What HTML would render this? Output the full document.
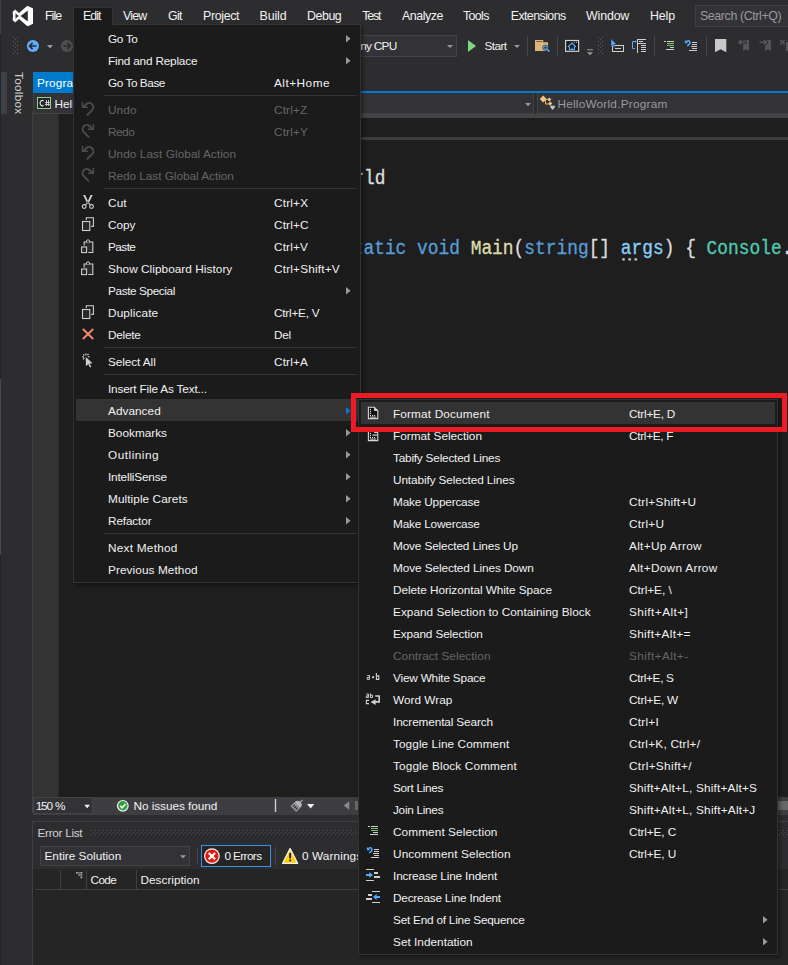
<!DOCTYPE html>
<html>
<head>
<meta charset="utf-8">
<title>Visual Studio</title>
<style>
html,body{margin:0;padding:0;width:788px;height:965px;overflow:hidden;}
body{width:788px;height:965px;overflow:hidden;background:#2d2d30;position:relative;
 font-family:"Liberation Sans",sans-serif;font-size:12px;color:#f1f1f1;}
.abs{position:absolute;}
.t{position:absolute;white-space:nowrap;line-height:14px;height:14px;}
svg{position:absolute;overflow:visible;}
.mb{position:absolute;top:9px;z-index:6;font-size:12.4px;letter-spacing:-0.15px;line-height:14px;white-space:nowrap;color:#f1f1f1;}
.menu{position:absolute;background:#1b1b1c;border:1px solid #333337;box-sizing:border-box;box-shadow:2px 2px 4px rgba(0,0,0,0.4);}
.mi{position:absolute;left:2px;right:2px;height:22px;}
.mi .l,.mi .s{position:absolute;top:5px;line-height:14px;white-space:nowrap;font-size:11.8px;letter-spacing:0px;}
.mi.dis{color:#656565;}
.mi.hl{background:#333334;}
.sep{position:absolute;height:1px;background:#333337;}
.arr{position:absolute;width:0;height:0;border-left:4.5px solid #999;border-top:3.75px solid transparent;border-bottom:3.75px solid transparent;}
.code{position:absolute;font-family:"Liberation Mono",monospace;font-size:20px;letter-spacing:0;line-height:24px;white-space:pre;color:#dcdcdc;transform:scaleX(0.8933);transform-origin:0 0;-webkit-text-stroke:0.35px;}
.vsep{position:absolute;width:1px;background:#46464a;}
</style>
</head>
<body>
<div id="root" style="position:absolute;left:0;top:0;width:788px;height:965px;overflow:hidden;">

<!-- ================= BACKGROUND APP ================= -->
<div id="app">
  <div class="abs" style="left:1px;top:72px;width:6px;height:42px;background:#3f3f46;"></div>
  <div class="abs" style="left:0;top:0;width:1px;height:34px;background:#3a4044;"></div>
  <div class="abs" style="left:0;top:34px;width:1px;height:345px;background:#222527;"></div>
  <div class="abs" style="left:0;top:379px;width:1px;height:176px;background:#454c50;"></div>
  <div class="abs" style="left:0;top:555px;width:1px;height:410px;background:#222527;"></div>
  <div class="t" style="left:26px;top:72px;transform:rotate(90deg);transform-origin:0 0;font-size:11.8px;color:#d0d0d0;letter-spacing:0.25px;">Toolbox</div>

  <div class="abs" style="left:33px;top:72px;width:60px;height:21px;background:#007acc;"></div>
  <div class="t" style="left:37px;top:76px;font-size:11.8px;color:#fff;letter-spacing:0.15px;">Program.cs</div>
  <div class="abs" style="left:33px;top:91px;width:755px;height:2px;background:#007acc;"></div>

  <div class="abs" style="left:33px;top:93px;width:755px;height:21px;background:#2d2d30;"></div>
  <div class="abs" style="left:33px;top:93px;width:501px;height:21px;box-sizing:border-box;background:#333337;border:1px solid #434346;border-top:none;"></div>
  <div class="abs" style="left:537px;top:93px;width:260px;height:21px;box-sizing:border-box;background:#333337;border:1px solid #434346;border-top:none;"></div>
  <svg style="left:33px;top:93px" width="40" height="22" viewBox="33 93 40 22">
    <rect x="37.5" y="97.5" width="13" height="11" fill="#252526" stroke="#8dd28a" stroke-width="1"/>
    <path d="M43.6 100.9A2.3 2.6 0 1 0 43.6 105.3" fill="none" stroke="#d8d8d8" stroke-width="1.2"/>
    <path d="M46.5 100.3V106M48.5 100.3V106M45 102.5H50M45 104.5H50" fill="none" stroke="#c8c8c8" stroke-width="1" shape-rendering="crispEdges"/>
  </svg>
  <div class="t" style="left:54.5px;top:97px;font-size:11.8px;color:#f1f1f1;">HelloWorld</div>
  <svg style="left:520px;top:93px" width="40" height="22" viewBox="520 93 40 22">
    <path d="M525 103H531L528 106.3Z" fill="#999"/>
    <path d="M545.5 100V104H549" fill="none" stroke="#e8b56d" stroke-width="1"/>
    <path d="M546 99.4H548.5" fill="none" stroke="#e8b56d" stroke-width="1"/>
    <path d="M543.2 95.6L546.6 99L543.2 102.4L539.8 99Z" fill="#f0c585"/>
    <path d="M549.4 97.4L551.4 99.4L549.4 101.4L547.4 99.4Z" fill="#f0c585"/>
    <path d="M550.2 101.5L552.3 103.6L550.2 105.7L548.1 103.6Z" fill="#f0c585"/>
    <path d="M552.6 110.2L550.2 107.4A1.5 1.5 0 0 1 552.6 105.7A1.5 1.5 0 0 1 555 107.4Z" fill="#c8c8c8" stroke="#333337" stroke-width="0.5"/>
  </svg>
  <div class="t" style="left:557.4px;top:97px;font-size:11.8px;color:#9a9a9a;letter-spacing:0.229px;">HelloWorld.Program</div>
  

  <div class="abs" style="left:33px;top:114px;width:755px;height:683px;background:#1e1e1e;"></div>
  <div class="abs" style="left:100px;top:114px;width:688px;height:4px;background:#444446;"></div>
  <div class="abs" style="left:33px;top:114px;width:25px;height:683px;background:#333333;"></div>
  <div class="abs" style="left:58px;top:114px;width:1px;height:683px;background:#2a2a2a;"></div>
  <div class="abs" style="left:32px;top:113px;width:1px;height:700px;background:#3f3f46;"></div>
  <div class="abs" style="left:100px;top:137px;width:688px;height:3px;background:#3c3c3c;"></div>

  <div class="code" style="left:171px;top:167px;">namespace HelloWorld</div>
  <div class="code" style="left:341.5px;top:236.5px;"><span style="color:#569cd6">static void</span> <span style="color:#dcdcaa">Main</span>(<span style="color:#569cd6">string</span>[] <span style="color:#8accf6">args</span>) { <span style="color:#4ec9b0">Console</span>.WriteLine</div>
  <svg style="left:620px;top:256px" width="20" height="8"><circle cx="3.5" cy="3.4" r="1.45" fill="#b4b4b4"/><circle cx="9.7" cy="3.4" r="1.45" fill="#b4b4b4"/><circle cx="15.8" cy="3.4" r="1.45" fill="#b4b4b4"/></svg>

  <div class="abs" style="left:33px;top:797px;width:755px;height:18px;background:#3e3e42;"></div>
  <div class="abs" style="left:33px;top:797px;width:60px;height:17px;box-sizing:border-box;background:#333337;border:1px solid #434346;"></div>
  <div class="t" style="left:35.7px;top:799px;font-size:11.8px;word-spacing:1px;letter-spacing:-1.15px;">150 %</div>
  <div class="t" style="left:133.5px;top:799px;font-size:11.8px;letter-spacing:-0.057px;">No issues found</div>
  <svg style="left:33px;top:797px" width="755" height="18" viewBox="33 797 755 18">
    <path d="M84.3 804.7H90L87.15 808.3Z" fill="#f1f1f1"/>
    <circle cx="122.8" cy="805.8" r="5.9" fill="#f4f4f4"/>
    <circle cx="122.8" cy="805.8" r="4.7" fill="#2f9e3c"/>
    <path d="M120.2 805.9L122.1 807.8L125.5 803.9" fill="none" stroke="#fff" stroke-width="1.5"/>
    <rect x="274.8" y="799" width="1.4" height="13" fill="#c8d0d8"/>
    <g transform="rotate(45 297 805.5)" fill="none" stroke="#b4b4b4" stroke-width="1">
      <path d="M297 797.5V801"/>
      <path d="M293.6 804.6A3.4 3.6 0 0 1 300.4 804.6Z" fill="#b4b4b4"/>
      <rect x="293.6" y="805.8" width="6.8" height="4.2"/>
      <path d="M295.8 806V810M298.2 806V810" stroke-width="0.8"/>
    </g>
    <path d="M307 804H314.3L310.65 808.6Z" fill="#f1f1f1"/>
    <path d="M349.2 801.2V809.8L343.8 805.5Z" fill="#8a8a8a"/>
    <rect x="355" y="801" width="433" height="9" fill="#686868"/>
  </svg>

  <div class="abs" style="left:32px;top:821px;width:760px;height:150px;background:#2d2d30;border:1px solid #3f3f46;box-sizing:border-box;"></div>
  <div class="t" style="left:37.5px;top:825.7px;font-size:11.8px;color:#d0d0d0;letter-spacing:-0.311px;">Error List</div>
  <svg style="left:91px;top:830px" width="697" height="5" viewBox="0 0 697 5">
    <defs><pattern id="gp" x="0" y="0" width="4" height="4" patternUnits="userSpaceOnUse"><rect x="0" y="0" width="1" height="1" fill="#4e4e52"/><rect x="2" y="2" width="1" height="1" fill="#4e4e52"/></pattern></defs>
    <rect x="0" y="0" width="697" height="5" fill="url(#gp)"/>
  </svg>
  <div class="abs" style="left:40px;top:846px;width:150px;height:20px;box-sizing:border-box;background:#333337;border:1px solid #434346;"></div>
  <div class="t" style="left:44.5px;top:849px;font-size:11.8px;letter-spacing:0px;">Entire Solution</div>
  <div class="vsep" style="left:197px;top:847px;height:18px;"></div>
  <div class="abs" style="left:201px;top:845px;width:70px;height:22px;box-sizing:border-box;background:#252526;border:1px solid #3794e8;"></div>
  <div class="t" style="left:224.5px;top:849px;font-size:11.8px;letter-spacing:-0.629px;">0 Errors</div>
  <div class="vsep" style="left:275px;top:847px;height:18px;"></div>
  <div class="t" style="left:302px;top:849px;font-size:11.8px;letter-spacing:0.1px;">0 Warnings</div>
  <svg style="left:33px;top:845px" width="330" height="22" viewBox="33 845 330 22">
    <path d="M180 855.2H186L183 858.4Z" fill="#999"/>
    <circle cx="211.9" cy="856.1" r="7.9" fill="#f4f4f4"/>
    <circle cx="211.9" cy="856.1" r="6.7" fill="#e01b10"/>
    <path d="M208.7 852.9L215.1 859.3M215.1 852.9L208.7 859.3" stroke="#fff" stroke-width="2.1"/>
    <path d="M290.1 848.6L297.6 863.3H282.6Z" fill="#ffcc00" stroke="#f4f4f4" stroke-width="1.3" stroke-linejoin="round"/>
    <rect x="289.3" y="853" width="1.7" height="5.4" fill="#111"/><rect x="289.3" y="859.6" width="1.7" height="1.7" fill="#111"/>
  </svg>
  <div class="abs" style="left:33px;top:869px;width:755px;height:96px;background:#252526;"></div>
  <div class="abs" style="left:35px;top:889px;width:753px;height:1px;background:#3f3f46;"></div>
  <div class="abs" style="left:60px;top:870px;width:1px;height:19px;background:#3f3f46;"></div>
  <div class="abs" style="left:86px;top:870px;width:1px;height:19px;background:#3f3f46;"></div>
  <div class="abs" style="left:136px;top:870px;width:1px;height:19px;background:#3f3f46;"></div>
  <svg style="left:76px;top:872px" width="8" height="8" viewBox="0 0 8 8"><rect x="0" y="0" width="6.2" height="1.5" fill="#7a7a7c"/><rect x="0" y="0" width="1.3" height="1.5" fill="#a8a8a8"/><rect x="4.9" y="0" width="1.3" height="1.5" fill="#a8a8a8"/><rect x="2" y="1.8" width="4.2" height="2.2" fill="#707072"/><rect x="4.4" y="4.6" width="1.8" height="1.6" fill="#b0b0b0"/><rect x="4.9" y="1.5" width="1.3" height="3.2" fill="#7a7a7c"/></svg>
  <div class="t" style="left:90.5px;top:873px;font-size:11.8px;letter-spacing:-0.633px;">Code</div>
  <div class="t" style="left:140.5px;top:873px;font-size:11.8px;letter-spacing:0px;">Description</div>
</div>

<!-- ================= TOOLBAR ================= -->
<div id="toolbar">
  <svg style="left:0;top:0" width="40" height="32" viewBox="0 0 40 32">
    <defs><clipPath id="lc"><rect x="12.7" y="5.6" width="20.4" height="20.9"/></clipPath></defs>
    <g clip-path="url(#lc)" fill="#fff" stroke="none">
      <path d="M13.6 11.3L28.6 24.4" stroke="#fff" stroke-width="4.5" fill="none"/>
      <path d="M13.6 20.8L28.6 7.7" stroke="#fff" stroke-width="4.5" fill="none"/>
      <polygon points="27.3,5.7 33.1,8.4 33.1,23.8 27.3,26.4"/>
      <rect x="12.7" y="11.2" width="2.5" height="9.7"/>
    </g>
    <polygon points="15.5,13.3 18.5,16.05 15.5,18.8" fill="#2d2d30"/>
    <polygon points="20.6,16.05 27.7,10.6 27.7,21.5" fill="#2d2d30"/>
  </svg>
  <svg style="left:0;top:32px" width="80" height="28" viewBox="0 32 80 28">
    <rect x="13" y="37" width="1" height="1" fill="#5d5d62"/><rect x="17" y="37" width="1" height="1" fill="#5d5d62"/><rect x="15" y="39" width="1" height="1" fill="#5d5d62"/><rect x="13" y="41" width="1" height="1" fill="#5d5d62"/><rect x="17" y="41" width="1" height="1" fill="#5d5d62"/><rect x="15" y="43" width="1" height="1" fill="#5d5d62"/><rect x="13" y="45" width="1" height="1" fill="#5d5d62"/><rect x="17" y="45" width="1" height="1" fill="#5d5d62"/><rect x="15" y="47" width="1" height="1" fill="#5d5d62"/><rect x="13" y="49" width="1" height="1" fill="#5d5d62"/><rect x="17" y="49" width="1" height="1" fill="#5d5d62"/><rect x="15" y="51" width="1" height="1" fill="#5d5d62"/><rect x="13" y="53" width="1" height="1" fill="#5d5d62"/><rect x="17" y="53" width="1" height="1" fill="#5d5d62"/>
    <circle cx="32.9" cy="46" r="6.1" fill="#5eaefc"/>
    <path d="M36.6 46H29.8M32.6 42.9L29.5 46L32.6 49.1" fill="none" stroke="#2d2d30" stroke-width="1.7"/>
    <path d="M47 45L53 45L50 48.4Z" fill="#999"/>
    <circle cx="66.9" cy="46" r="6.1" fill="#4f4f52"/>
    <path d="M63.2 46H70M67.2 42.9L70.3 46L67.2 49.1" fill="none" stroke="#2d2d30" stroke-width="1.7"/>
  </svg>
  <div class="abs" style="left:300px;top:35px;width:157px;height:22px;box-sizing:border-box;background:#333337;border:1px solid #434346;"></div>
  <div class="t" style="left:353px;top:39px;font-size:11.8px;letter-spacing:-0.717px;">Any CPU</div>
  <div class="abs" style="left:447px;top:45px;width:0;height:0;border-top:3px solid #999;border-left:3px solid transparent;border-right:3px solid transparent;"></div>
  <div class="abs" style="left:468px;top:40px;width:0;height:0;border-left:8px solid #82d682;border-top:6px solid transparent;border-bottom:6px solid transparent;"></div>
  <div class="t" style="left:484.5px;top:39px;font-size:11.8px;letter-spacing:-0.6px;">Start</div>
  <div class="abs" style="left:513.5px;top:45px;width:0;height:0;border-top:3px solid #999;border-left:3px solid transparent;border-right:3px solid transparent;"></div>
  <svg style="left:0;top:0" width="788" height="64" viewBox="0 0 788 64">
    <!-- folder search -->
    <path d="M535 40H543.2V42.3H548.1V51.1H535Z" fill="#dcb67a"/>
    <rect x="536.2" y="41.2" width="5.8" height="0.8" fill="#5a4a30"/>
    <circle cx="545.4" cy="47.6" r="2.9" fill="#2d2d30"/>
    <path d="M547 49.2L549.6 51.8" stroke="#2d2d30" stroke-width="3.2"/>
    <circle cx="545.4" cy="47.6" r="1.8" fill="#2d2d30" stroke="#55aaff" stroke-width="1.2"/>
    <path d="M546.8 49L549.4 51.6" stroke="#55aaff" stroke-width="1.5"/>
    <!-- window/home -->
    <rect x="565.6" y="40.5" width="13" height="10.8" fill="#1a1a1a" stroke="#cfcfcf" stroke-width="1.2"/>
    <rect x="573.7" y="41.8" width="1" height="1" fill="#cfcfcf"/><rect x="576" y="41.8" width="1" height="1" fill="#cfcfcf"/>
    <path d="M567.9 47L571.9 43L575.9 47" fill="none" stroke="#55aaff" stroke-width="1.2"/>
    <path d="M569.4 46.6V49.6H574.4V46.6" fill="none" stroke="#55aaff" stroke-width="1.1"/>
    <rect x="571.4" y="47.8" width="1.1" height="1.6" fill="#55aaff"/>
    <!-- overflow -->
    <rect x="587" y="49.3" width="6" height="1" fill="#999"/>
    <path d="M587 52.3H593L590 55.2Z" fill="#999"/>
    <rect x="598" y="37" width="1" height="1" fill="#5d5d62"/><rect x="602" y="37" width="1" height="1" fill="#5d5d62"/><rect x="600" y="39" width="1" height="1" fill="#5d5d62"/><rect x="598" y="41" width="1" height="1" fill="#5d5d62"/><rect x="602" y="41" width="1" height="1" fill="#5d5d62"/><rect x="600" y="43" width="1" height="1" fill="#5d5d62"/><rect x="598" y="45" width="1" height="1" fill="#5d5d62"/><rect x="602" y="45" width="1" height="1" fill="#5d5d62"/><rect x="600" y="47" width="1" height="1" fill="#5d5d62"/><rect x="598" y="49" width="1" height="1" fill="#5d5d62"/><rect x="602" y="49" width="1" height="1" fill="#5d5d62"/><rect x="600" y="51" width="1" height="1" fill="#5d5d62"/><rect x="598" y="53" width="1" height="1" fill="#5d5d62"/><rect x="602" y="53" width="1" height="1" fill="#5d5d62"/>
    <!-- cursor + box -->
    <rect x="612.5" y="45.5" width="11" height="6" fill="none" stroke="#cfcfcf" stroke-width="1"/>
    <rect x="615" y="48" width="6" height="1" fill="#cfcfcf"/>
    <path d="M611 38.8L616.6 44.3L614 44.5L615.2 46.8L613.8 47.4L612.6 45.1L611 46.7Z" fill="#55aaff" stroke="#2d2d30" stroke-width="0.5"/>
    <!-- bracket + lines -->
    <path d="M635 48.5H632.5V41.5H635.5" fill="none" stroke="#55aaff" stroke-width="1"/>
    <path d="M635 40.2L636.8 41.5L635 42.9Z" fill="#55aaff"/>
    <rect x="637" y="39" width="1" height="14" fill="#cfcfcf"/>
    <rect x="637" y="39" width="9" height="1" fill="#cfcfcf"/>
    <rect x="639" y="41" width="4" height="1" fill="#cfcfcf"/>
    <rect x="638" y="43" width="8" height="1" fill="#cfcfcf"/>
    <rect x="641" y="45" width="5" height="1" fill="#cfcfcf"/><rect x="641" y="47" width="5" height="1" fill="#cfcfcf"/>
    <rect x="641" y="49" width="5" height="1" fill="#cfcfcf"/><rect x="641" y="51" width="5" height="1" fill="#cfcfcf"/>
    <!-- comment -->
    <g transform="translate(661 38)"><rect x="3" y="3" width="2" height="1" fill="#cfcfcf"/><rect x="6" y="3" width="7" height="1" fill="#cfcfcf"/><rect x="6" y="5" width="7" height="1" fill="#7cc36e"/><rect x="6" y="7" width="7" height="1" fill="#7cc36e"/><rect x="9" y="9" width="4" height="1" fill="#cfcfcf"/><rect x="5" y="11" width="8" height="1" fill="#cfcfcf"/></g>
    <!-- uncomment -->
    <g transform="translate(683 38)"><rect x="9" y="4" width="5" height="1" fill="#cfcfcf"/><rect x="9" y="6" width="5" height="1" fill="#cfcfcf"/><rect x="8" y="8" width="6" height="1" fill="#cfcfcf"/><rect x="9" y="10" width="5" height="1" fill="#cfcfcf"/><rect x="6" y="12" width="8" height="1" fill="#cfcfcf"/><path d="M4.3 8L6.6 5.9A1.9 1.9 0 0 0 4.6 2.9L3.3 3.6" fill="none" stroke="#55aaff" stroke-width="1.5"/><path d="M1.9 2V5.2H5.2Z" fill="#55aaff"/></g>
    <!-- bookmark -->
    <path d="M715 39H726.3V52.3L720.6 49.3L715 52.3Z" fill="#c8c8c8"/>
    <!-- dim bookmarks -->
    <path d="M743.2 40H749V51L746.1 49.2L743.2 51Z" fill="#555558"/>
    <path d="M746.6 42.2H739M741.4 39.8L738.8 42.2L741.4 44.6" fill="none" stroke="#2d2d30" stroke-width="3.4"/><path d="M745.6 42.2H739M741.4 39.8L738.8 42.2L741.4 44.6" fill="none" stroke="#555558" stroke-width="1.5"/>
    <path d="M765 40H770.9V51L768 49.2L765 51Z" fill="#555558"/>
    <path d="M759.4 42.2H767M763.8 39.6L766.4 42.2L763.8 44.8" fill="none" stroke="#2d2d30" stroke-width="3.4"/><path d="M759.4 42.2H766M763.8 39.8L766.4 42.2L763.8 44.6" fill="none" stroke="#555558" stroke-width="1.5"/>
    <path d="M786 42H792V51H786Z" fill="#555558"/>
    <path d="M780 39.8L784.8 44.4M784.8 39.8L780 44.4" stroke="#555558" stroke-width="1.5"/>
  </svg>
  <div class="vsep" style="left:527px;top:36px;height:20px;"></div>
  <div class="vsep" style="left:557px;top:36px;height:20px;"></div>
  <div class="vsep" style="left:654px;top:36px;height:20px;"></div>
  <div class="vsep" style="left:706px;top:36px;height:20px;"></div>
</div>

<!-- ================= MENU BAR ================= -->
<div id="menubar">
  <div class="abs" style="left:73px;top:7px;width:40px;height:19px;background:#1b1b1c;border:1px solid #333337;border-bottom:none;box-sizing:border-box;z-index:5;"></div>
  <div class="mb" style="left:45px;letter-spacing:-0.95px;">File</div>
  <div class="mb" style="left:83px;letter-spacing:-0.95px;">Edit</div>
  <div class="mb" style="left:123.1px;letter-spacing:-0.85px;">View</div>
  <div class="mb" style="left:168px;letter-spacing:-0.7px;">Git</div>
  <div class="mb" style="left:203px;letter-spacing:-0.333px;">Project</div>
  <div class="mb" style="left:259.6px;letter-spacing:-0.15px;">Build</div>
  <div class="mb" style="left:307px;letter-spacing:-0.45px;">Debug</div>
  <div class="mb" style="left:362.3px;letter-spacing:-1.183px;">Test</div>
  <div class="mb" style="left:402px;letter-spacing:-0.467px;">Analyze</div>
  <div class="mb" style="left:463px;letter-spacing:-0.65px;">Tools</div>
  <div class="mb" style="left:510.7px;letter-spacing:-0.572px;">Extensions</div>
  <div class="mb" style="left:586px;letter-spacing:-0.15px;">Window</div>
  <div class="mb" style="left:650px;letter-spacing:-0.15px;">Help</div>
  <div class="abs" style="left:695px;top:5px;width:100px;height:22px;box-sizing:border-box;border:1px solid #3f3f46;background:#333337;"></div>
  <div class="mb" style="left:700px;color:#999;letter-spacing:-0.393px;">Search (Ctrl+Q)</div>
</div>
<div class="menu" id="editmenu" style="left:73px;top:24px;width:288px;height:559px;">
<div class="mi" style="top:2px;"><span class="l" style="left:32px;letter-spacing:-0.375px">Go To</span><svg style="left:270px;top:7.6px" width="5" height="8" viewBox="0 0 5 8"><path d="M0 0L4.6 3.7L0 7.4Z" fill="#999"/></svg></div>
<div class="mi" style="top:24px;"><span class="l" style="left:32px;letter-spacing:-0.200px">Find and Replace</span><svg style="left:270px;top:7.6px" width="5" height="8" viewBox="0 0 5 8"><path d="M0 0L4.6 3.7L0 7.4Z" fill="#999"/></svg></div>
<div class="mi" style="top:46px;"><span class="l" style="left:32px;letter-spacing:-0.444px">Go To Base</span><span class="s" style="left:198px;letter-spacing:0.485px">Alt+Home</span></div>
<div class="sep" style="left:30px;top:70px;width:253px;"></div>
<div class="mi dis" style="top:73px;"><svg style="left:4px;top:3px" width="16" height="16" viewBox="0 0 16 16"><path d="M6.9 14.3L12.1 9.1A4.1 4.1 0 0 0 6.3 3.2L4 5.4" fill="none" stroke="#4c4c4c" stroke-width="1.9"/><path d="M1.8 1.1H3.3V4.2L4.6 5.4H7.9V7H1.8Z" fill="#4c4c4c"/></svg><span class="l" style="left:32px;letter-spacing:0.084px">Undo</span><span class="s" style="left:198px;letter-spacing:0.160px">Ctrl+Z</span></div>
<div class="mi dis" style="top:95px;"><svg style="left:4px;top:3px" width="16" height="16" viewBox="0 0 16 16"><g transform="translate(15.9 0) scale(-1 1)"><path d="M6.9 14.3L12.1 9.1A4.1 4.1 0 0 0 6.3 3.2L4 5.4" fill="none" stroke="#4c4c4c" stroke-width="1.9"/><path d="M1.8 1.1H3.3V4.2L4.6 5.4H7.9V7H1.8Z" fill="#4c4c4c"/></g></svg><span class="l" style="left:32px;letter-spacing:-0.500px">Redo</span><span class="s" style="left:198px;letter-spacing:0.160px">Ctrl+Y</span></div>
<div class="mi dis" style="top:117px;"><svg style="left:4px;top:3px" width="16" height="16" viewBox="0 0 16 16"><path d="M6.9 14.3L12.1 9.1A4.1 4.1 0 0 0 6.3 3.2L4 5.4" fill="none" stroke="#4c4c4c" stroke-width="1.9"/><path d="M1.8 1.1H3.3V4.2L4.6 5.4H7.9V7H1.8Z" fill="#4c4c4c"/></svg><span class="l" style="left:32px;letter-spacing:0.068px">Undo Last Global Action</span></div>
<div class="mi dis" style="top:139px;"><svg style="left:4px;top:3px" width="16" height="16" viewBox="0 0 16 16"><g transform="translate(15.9 0) scale(-1 1)"><path d="M6.9 14.3L12.1 9.1A4.1 4.1 0 0 0 6.3 3.2L4 5.4" fill="none" stroke="#4c4c4c" stroke-width="1.9"/><path d="M1.8 1.1H3.3V4.2L4.6 5.4H7.9V7H1.8Z" fill="#4c4c4c"/></g></svg><span class="l" style="left:32px;letter-spacing:-0.033px">Redo Last Global Action</span></div>
<div class="sep" style="left:30px;top:163px;width:253px;"></div>
<div class="mi" style="top:166px;"><svg style="left:4px;top:3px" width="16" height="16" viewBox="0 0 16 16"><path d="M3.1 1L5.2 1L8.6 8.6L7.2 9.4Z M12.7 1L10.6 1L7.2 8.6L8.6 9.4Z" fill="#cfcfcf"/><path d="M7.1 9L5.6 10.8M8.7 9L10.2 10.8" stroke="#cfcfcf" stroke-width="1.1"/><circle cx="4.2" cy="12.5" r="1.9" fill="none" stroke="#cfcfcf" stroke-width="1.1"/><circle cx="11.5" cy="12.5" r="1.9" fill="none" stroke="#cfcfcf" stroke-width="1.1"/></svg><span class="l" style="left:32px;letter-spacing:0.125px">Cut</span><span class="s" style="left:198px;letter-spacing:0.180px">Ctrl+X</span></div>
<div class="mi" style="top:188px;"><svg style="left:4px;top:3px" width="16" height="16" viewBox="0 0 16 16"><path d="M6.3 4V1.8H13.4V10.4H11.3" fill="none" stroke="#cfcfcf" stroke-width="1.1"/><rect x="2.5" y="5.5" width="7.3" height="9" fill="#2a2a2d" stroke="#cfcfcf" stroke-width="1.1"/></svg><span class="l" style="left:32px;letter-spacing:-0.084px">Copy</span><span class="s" style="left:198px;letter-spacing:0.140px">Ctrl+C</span></div>
<div class="mi" style="top:210px;"><svg style="left:4px;top:3px" width="16" height="16" viewBox="0 0 16 16"><path d="M4.1 7.6V4H12.8V14.5H8.3" fill="#2a2a2d" stroke="#cfcfcf" stroke-width="1.1"/><path d="M6.4 4V3.2Q8 0.4 9.6 3.2V4" fill="#1b1b1c" stroke="#cfcfcf" stroke-width="1.1"/><rect x="1.6" y="9" width="5" height="5.6" fill="#2a2a2d" stroke="#cfcfcf" stroke-width="1.1"/></svg><span class="l" style="left:32px;letter-spacing:-0.564px">Paste</span><span class="s" style="left:198px;letter-spacing:0.140px">Ctrl+V</span></div>
<div class="mi" style="top:232px;"><svg style="left:4px;top:3px" width="16" height="16" viewBox="0 0 16 16"><path d="M4.1 7.6V4H12.8V14.5H8.3" fill="#2a2a2d" stroke="#cfcfcf" stroke-width="1.1"/><path d="M6.4 4V3.2Q8 0.4 9.6 3.2V4" fill="#1b1b1c" stroke="#cfcfcf" stroke-width="1.1"/><rect x="1.6" y="9" width="5" height="5.6" fill="#2a2a2d" stroke="#cfcfcf" stroke-width="1.1"/></svg><span class="l" style="left:32px;letter-spacing:0.048px">Show Clipboard History</span><span class="s" style="left:198px;letter-spacing:0.182px">Ctrl+Shift+V</span></div>
<div class="mi" style="top:254px;"><span class="l" style="left:32px;letter-spacing:-0.396px">Paste Special</span><svg style="left:270px;top:7.6px" width="5" height="8" viewBox="0 0 5 8"><path d="M0 0L4.6 3.7L0 7.4Z" fill="#999"/></svg></div>
<div class="mi" style="top:276px;"><svg style="left:4px;top:3px" width="16" height="16" viewBox="0 0 16 16"><path d="M6.3 4V1.8H13.4V10.4H11.3" fill="none" stroke="#cfcfcf" stroke-width="1.1"/><rect x="2.5" y="5.5" width="7.3" height="9" fill="#2a2a2d" stroke="#cfcfcf" stroke-width="1.1"/></svg><span class="l" style="left:32px;letter-spacing:0.125px">Duplicate</span><span class="s" style="left:198px;letter-spacing:-0.239px">Ctrl+E, V</span></div>
<div class="mi" style="top:298px;"><svg style="left:4px;top:3px" width="16" height="16" viewBox="0 0 16 16"><path d="M2.9 3L13.2 13M13.2 3L2.9 13" stroke="#f48771" stroke-width="2"/></svg><span class="l" style="left:32px;letter-spacing:-0.250px">Delete</span><span class="s" style="left:198px;letter-spacing:-0.300px">Del</span></div>
<div class="sep" style="left:30px;top:322px;width:253px;"></div>
<div class="mi" style="top:325px;"><svg style="left:4px;top:3px" width="16" height="16" viewBox="0 0 16 16"><path d="M5.8 4L12.5 10.3L9.6 10.5L11.3 13.8L9.9 14.4L8.3 11.1L5.9 13.2Z" fill="#cfcfcf"/><path d="M5.9 0.6V2.2M2.4 3.9H4M7.8 3.7H9.4M3.3 1.3L4.4 2.4M8.5 1.1L7.4 2.2M3.2 6.3L4.3 5.2" stroke="#e4e4e4" stroke-width="1.15"/></svg><span class="l" style="left:32px;letter-spacing:-0.084px">Select All</span><span class="s" style="left:198px;letter-spacing:0.160px">Ctrl+A</span></div>
<div class="sep" style="left:30px;top:349px;width:253px;"></div>
<div class="mi" style="top:352px;"><span class="l" style="left:32px;letter-spacing:-0.179px">Insert File As Text...</span></div>
<div class="mi hl" style="top:374px;"><span class="l" style="left:32px;letter-spacing:0.035px">Advanced</span><svg style="left:270px;top:7.6px" width="5" height="8" viewBox="0 0 5 8"><path d="M0 0L4.6 3.7L0 7.4Z" fill="#007acc"/></svg></div>
<div class="mi" style="top:396px;"><span class="l" style="left:32px;letter-spacing:0.000px">Bookmarks</span><svg style="left:270px;top:7.6px" width="5" height="8" viewBox="0 0 5 8"><path d="M0 0L4.6 3.7L0 7.4Z" fill="#999"/></svg></div>
<div class="mi" style="top:418px;"><span class="l" style="left:32px;letter-spacing:0.500px">Outlining</span><svg style="left:270px;top:7.6px" width="5" height="8" viewBox="0 0 5 8"><path d="M0 0L4.6 3.7L0 7.4Z" fill="#999"/></svg></div>
<div class="mi" style="top:440px;"><span class="l" style="left:32px;letter-spacing:-0.182px">IntelliSense</span><svg style="left:270px;top:7.6px" width="5" height="8" viewBox="0 0 5 8"><path d="M0 0L4.6 3.7L0 7.4Z" fill="#999"/></svg></div>
<div class="mi" style="top:462px;"><span class="l" style="left:32px;letter-spacing:0.071px">Multiple Carets</span><svg style="left:270px;top:7.6px" width="5" height="8" viewBox="0 0 5 8"><path d="M0 0L4.6 3.7L0 7.4Z" fill="#999"/></svg></div>
<div class="mi" style="top:484px;"><span class="l" style="left:32px;letter-spacing:-0.143px">Refactor</span><svg style="left:270px;top:7.6px" width="5" height="8" viewBox="0 0 5 8"><path d="M0 0L4.6 3.7L0 7.4Z" fill="#999"/></svg></div>
<div class="sep" style="left:30px;top:508px;width:253px;"></div>
<div class="mi" style="top:511px;"><span class="l" style="left:32px;letter-spacing:0.250px">Next Method</span></div>
<div class="mi" style="top:533px;"><span class="l" style="left:32px;letter-spacing:0.079px">Previous Method</span></div>
</div>
<div class="menu" id="submenu" style="left:358px;top:399px;width:420px;height:556px;">
<div class="mi hl" style="top:2px;"><svg style="left:4px;top:3px" width="16" height="16" viewBox="0 0 16 16"><path d="M3.4 2.3H9.3L12.8 5.8V13.6H3.4Z" fill="#141414" stroke="#d6d6d6" stroke-width="1.1"/><path d="M9.1 2.3V6H12.8Z" fill="#d6d6d6"/><rect x="4.9" y="4" width="1.1" height="1.1" fill="#f4f4f4"/><rect x="4.9" y="6.1" width="1.1" height="1.1" fill="#f4f4f4"/><rect x="4.9" y="8.1" width="1.1" height="1.1" fill="#f4f4f4"/><rect x="4.9" y="10.1" width="1.1" height="1.1" fill="#f4f4f4"/><rect x="7" y="10.1" width="1.1" height="1.1" fill="#f4f4f4"/><rect x="9" y="10.1" width="1.1" height="1.1" fill="#f4f4f4"/><rect x="5" y="11.7" width="6.3" height="0.9" fill="#d6d6d6"/></svg><span class="l" style="left:32px;letter-spacing:0.143px">Format Document</span><span class="s" style="left:268px;letter-spacing:-0.225px">Ctrl+E, D</span></div>
<div class="mi" style="top:24px;"><svg style="left:4px;top:3px" width="16" height="16" viewBox="0 0 16 16"><path d="M3.4 2.3H9.3L12.8 5.8V13.6H3.4Z" fill="#141414" stroke="#d6d6d6" stroke-width="1.1"/><path d="M9.1 2.3V6H12.8Z" fill="#d6d6d6"/><rect x="4.9" y="4" width="1.1" height="1.1" fill="#f4f4f4"/><rect x="4.9" y="6.1" width="1.1" height="1.1" fill="#f4f4f4"/><rect x="4.9" y="8.1" width="1.1" height="1.1" fill="#f4f4f4"/><rect x="4.9" y="10.1" width="1.1" height="1.1" fill="#f4f4f4"/><rect x="7" y="10.1" width="1.1" height="1.1" fill="#f4f4f4"/><rect x="9" y="10.1" width="1.1" height="1.1" fill="#f4f4f4"/><rect x="5" y="11.7" width="6.3" height="0.9" fill="#d6d6d6"/><rect x="7.4" y="7.5" width="5" height="1.1" fill="#e8e8e8"/></svg><span class="l" style="left:32px;letter-spacing:-0.014px">Format Selection</span><span class="s" style="left:268px;letter-spacing:-0.300px">Ctrl+E, F</span></div>
<div class="mi" style="top:46px;"><span class="l" style="left:32px;letter-spacing:-0.210px">Tabify Selected Lines</span></div>
<div class="mi" style="top:68px;"><span class="l" style="left:32px;letter-spacing:-0.105px">Untabify Selected Lines</span></div>
<div class="mi" style="top:90px;"><span class="l" style="left:32px;letter-spacing:-0.185px">Make Uppercase</span><span class="s" style="left:268px;letter-spacing:0.255px">Ctrl+Shift+U</span></div>
<div class="mi" style="top:112px;"><span class="l" style="left:32px;letter-spacing:-0.185px">Make Lowercase</span><span class="s" style="left:268px;letter-spacing:0.240px">Ctrl+U</span></div>
<div class="mi" style="top:134px;"><span class="l" style="left:32px;letter-spacing:-0.138px">Move Selected Lines Up</span><span class="s" style="left:268px;letter-spacing:0.310px">Alt+Up Arrow</span></div>
<div class="mi" style="top:156px;"><span class="l" style="left:32px;letter-spacing:-0.095px">Move Selected Lines Down</span><span class="s" style="left:268px;letter-spacing:0.308px">Alt+Down Arrow</span></div>
<div class="mi" style="top:178px;"><span class="l" style="left:32px;letter-spacing:-0.060px">Delete Horizontal White Space</span><span class="s" style="left:268px;letter-spacing:-0.025px">Ctrl+E, \</span></div>
<div class="mi" style="top:200px;"><span class="l" style="left:32px;letter-spacing:0.026px">Expand Selection to Containing Block</span><span class="s" style="left:268px;letter-spacing:0.440px">Shift+Alt+]</span></div>
<div class="mi" style="top:222px;"><span class="l" style="left:32px;letter-spacing:-0.126px">Expand Selection</span><span class="s" style="left:268px;letter-spacing:0.340px">Shift+Alt+=</span></div>
<div class="mi dis" style="top:244px;"><span class="l" style="left:32px;letter-spacing:0.064px">Contract Selection</span><span class="s" style="left:268px;letter-spacing:0.400px">Shift+Alt+-</span></div>
<div class="mi" style="top:266px;"><svg style="left:4px;top:3px" width="16" height="16" viewBox="0 0 16 16"><path d="M2.3 6.5H4.5V10.4H2.2V8.4H4.5" fill="none" stroke="#cfcfcf" stroke-width="1"/><rect x="7.2" y="7.3" width="1.8" height="1.8" fill="#f0f0f0"/><path d="M11.4 4.1V10.4H13.8V6.9H11.4" fill="none" stroke="#cfcfcf" stroke-width="1.1"/></svg><span class="l" style="left:32px;letter-spacing:-0.200px">View White Space</span><span class="s" style="left:268px;letter-spacing:-0.325px">Ctrl+E, S</span></div>
<div class="mi" style="top:288px;"><svg style="left:4px;top:3px" width="16" height="16" viewBox="0 0 16 16"><path d="M1.3 3H3.4V6.5H1.3V4.9H3.4" fill="none" stroke="#cfcfcf" stroke-width="1"/><path d="M5.4 2.4V6.5H7.6V4.2H5.4" fill="none" stroke="#cfcfcf" stroke-width="1"/><path d="M4 9.4H1.4V12.6H4" fill="none" stroke="#cfcfcf" stroke-width="1.1"/><path d="M10.2 5H14.2V10.9H9.6" fill="none" stroke="#cfcfcf" stroke-width="1.6"/><path d="M5.6 11.1L10.6 8.2V14Z" fill="#cfcfcf"/></svg><span class="l" style="left:32px;letter-spacing:0.011px">Word Wrap</span><span class="s" style="left:268px;letter-spacing:-0.200px">Ctrl+E, W</span></div>
<div class="mi" style="top:310px;"><span class="l" style="left:32px;letter-spacing:-0.130px">Incremental Search</span><span class="s" style="left:268px;letter-spacing:0.240px">Ctrl+I</span></div>
<div class="mi" style="top:332px;"><span class="l" style="left:32px;letter-spacing:0.078px">Toggle Line Comment</span><span class="s" style="left:268px;letter-spacing:0.215px">Ctrl+K, Ctrl+/</span></div>
<div class="mi" style="top:354px;"><span class="l" style="left:32px;letter-spacing:0.126px">Toggle Block Comment</span><span class="s" style="left:268px;letter-spacing:0.327px">Ctrl+Shift+/</span></div>
<div class="mi" style="top:376px;"><span class="l" style="left:32px;letter-spacing:-0.288px">Sort Lines</span><span class="s" style="left:268px;letter-spacing:0.201px">Shift+Alt+L, Shift+Alt+S</span></div>
<div class="mi" style="top:398px;"><span class="l" style="left:32px;letter-spacing:-0.288px">Join Lines</span><span class="s" style="left:268px;letter-spacing:0.213px">Shift+Alt+L, Shift+Alt+J</span></div>
<div class="mi" style="top:420px;"><svg style="left:4px;top:3px" width="16" height="16" viewBox="0 0 16 16"><rect x="3" y="3" width="2" height="1" fill="#cfcfcf"/><rect x="6" y="3" width="7" height="1" fill="#cfcfcf"/><rect x="6" y="5" width="7" height="1" fill="#7cc36e"/><rect x="6" y="7" width="7" height="1" fill="#7cc36e"/><rect x="8" y="9" width="5" height="1" fill="#cfcfcf"/><rect x="5" y="11" width="8" height="1" fill="#cfcfcf"/></svg><span class="l" style="left:32px;letter-spacing:0.089px">Comment Selection</span><span class="s" style="left:268px;letter-spacing:-0.125px">Ctrl+E, C</span></div>
<div class="mi" style="top:442px;"><svg style="left:4px;top:3px" width="16" height="16" viewBox="0 0 16 16"><rect x="9" y="4" width="5" height="1" fill="#cfcfcf"/><rect x="9" y="6" width="5" height="1" fill="#cfcfcf"/><rect x="8" y="8" width="6" height="1" fill="#cfcfcf"/><rect x="9" y="10" width="5" height="1" fill="#cfcfcf"/><rect x="6" y="12" width="8" height="1" fill="#cfcfcf"/><path d="M4.3 8L6.6 5.9A1.9 1.9 0 0 0 4.6 2.9L3.3 3.6" fill="none" stroke="#55aaff" stroke-width="1.5"/><path d="M1.9 2V5.2H5.2Z" fill="#55aaff"/></svg><span class="l" style="left:32px;letter-spacing:0.116px">Uncomment Selection</span><span class="s" style="left:268px;letter-spacing:-0.125px">Ctrl+E, U</span></div>
<div class="mi" style="top:464px;"><svg style="left:4px;top:3px" width="16" height="16" viewBox="0 0 16 16"><rect x="1" y="2" width="8" height="1" fill="#cfcfcf"/><rect x="1" y="13" width="8" height="1" fill="#cfcfcf"/><rect x="9" y="5" width="4" height="2" fill="#cfcfcf"/><rect x="9" y="9" width="6" height="2" fill="#cfcfcf"/><path d="M1 7.1H4.4V5L8 8L4.4 11V8.9H1Z" fill="#55aaff"/></svg><span class="l" style="left:32px;letter-spacing:-0.143px">Increase Line Indent</span></div>
<div class="mi" style="top:486px;"><svg style="left:4px;top:3px" width="16" height="16" viewBox="0 0 16 16"><rect x="7" y="2" width="8" height="1" fill="#cfcfcf"/><rect x="7" y="13" width="8" height="1" fill="#cfcfcf"/><rect x="3" y="5" width="4" height="2" fill="#cfcfcf"/><rect x="1" y="9" width="6" height="2" fill="#cfcfcf"/><path d="M15 7.1H11.6V5L8 8L11.6 11V8.9H15Z" fill="#55aaff"/></svg><span class="l" style="left:32px;letter-spacing:-0.211px">Decrease Line Indent</span></div>
<div class="mi" style="top:508px;"><span class="l" style="left:32px;letter-spacing:-0.230px">Set End of Line Sequence</span><svg style="left:402px;top:7.6px" width="5" height="8" viewBox="0 0 5 8"><path d="M0 0L4.6 3.7L0 7.4Z" fill="#999"/></svg></div>
<div class="mi" style="top:530px;"><span class="l" style="left:32px;letter-spacing:0.015px">Set Indentation</span><svg style="left:402px;top:7.6px" width="5" height="8" viewBox="0 0 5 8"><path d="M0 0L4.6 3.7L0 7.4Z" fill="#999"/></svg></div>
</div>
<div class="abs" style="left:351px;top:393px;width:436px;height:39px;box-sizing:border-box;border:5px solid #ed1c24;"></div>
</div>
</body>
</html>
